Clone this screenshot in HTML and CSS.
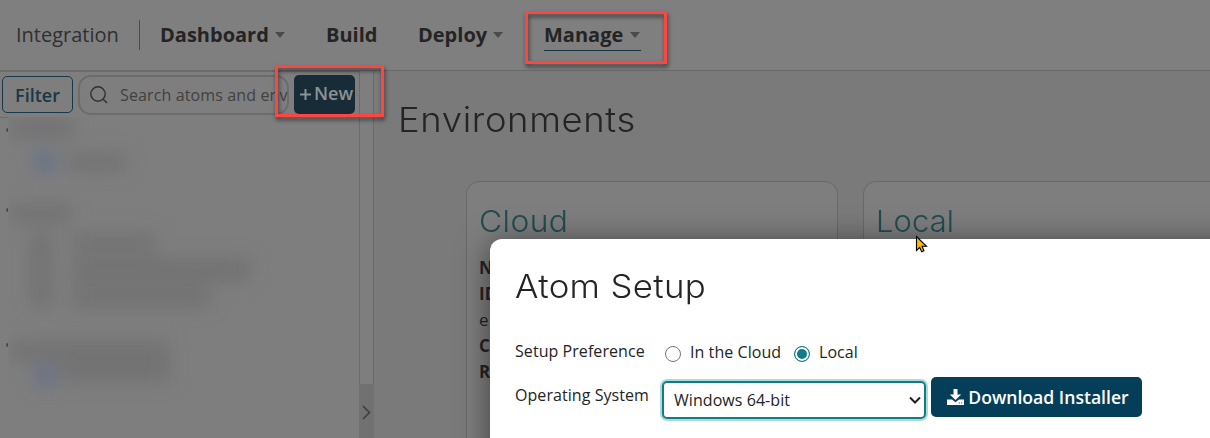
FILE: index.html
```
<!DOCTYPE html>
<html lang="en">
<head>
<meta charset="utf-8">
<title>Atom Setup</title>
<link rel="stylesheet" href="styles.css">
</head>
<body>
<div class="app">
  <header class="topbar">
    <span class="product">Integration</span>
    <nav class="nav">
      <a class="nav-item dashboard">Dashboard<i class="caret"></i></a>
      <a class="nav-item build">Build</a>
      <a class="nav-item deploy">Deploy<i class="caret"></i></a>
      <a class="nav-item manage active">Manage<i class="caret"></i></a>
    </nav>
  </header>
  <div class="workspace">
    <aside class="sidebar">
      <div class="toolbar">
        <button class="filter">Filter</button>
        <div class="search">
          <svg width="18" height="18" viewBox="0 0 18 18" fill="none" stroke="#303030" stroke-width="1.4"><circle cx="8" cy="8" r="7.2"/><path d="M13.2 13.2 17 17"/></svg>
          <span>Search atoms and env</span>
        </div>
        <button class="new"><svg width="11" height="11" viewBox="0 0 11 11" stroke="#8b9294" stroke-width="2"><path d="M5.5 0v11M0 5.5h11"/></svg><span>New</span></button>
      </div>
      <div class="tree">
        <svg width="359" height="321" viewBox="0 117 359 321">
          <defs>
            <filter id="soft" x="-50%" y="-50%" width="200%" height="200%"><feGaussianBlur stdDeviation="9"/></filter>
            <clipPath id="rows"><rect x="8" y="117" width="351" height="321"/></clipPath>
          </defs>
          <g fill="#4a4a4a"><circle cx="8" cy="130" r="2"/><circle cx="8" cy="210" r="2"/><circle cx="8" cy="345" r="2"/></g>
          <rect x="8" y="116" width="351" height="322" fill="#7e7e7e"/>
          <g clip-path="url(#rows)"><g filter="url(#soft)" fill="#727272">
            <rect x="10" y="118" width="64" height="20"/>
            <rect x="68" y="153" width="58" height="18"/>
            <rect x="10" y="204" width="62" height="19"/>
            <rect x="30" y="233" width="22" height="74"/>
            <rect x="72" y="233" width="84" height="20"/>
            <rect x="72" y="258" width="178" height="24"/>
            <rect x="72" y="286" width="138" height="22"/>
            <rect x="10" y="341" width="160" height="20"/>
            <rect x="60" y="362" width="110" height="20"/>
            <g fill="#65708a"><circle cx="45" cy="162" r="11"/><circle cx="45" cy="376" r="11"/></g>
          </g></g>
        </svg>
      </div>
    </aside>
    <div class="splitter"><div class="track"></div><div class="handle"><svg width="9" height="15" viewBox="0 0 9 15" fill="none" stroke="#404040" stroke-width="1.7"><path d="m1 1 6.5 6.5L1 14"/></svg></div></div>
    <main class="content">
      <h1>Environments</h1>
      <div class="cards">
        <section class="card"><h2 class="cloud">Cloud</h2>
          <div class="details"><b>N</b><b>ID</b><span>e</span><b>C</b><b>R</b></div>
        </section>
        <section class="card"><h2 class="local">Local</h2></section>
      </div>
    </main>
  </div>
  <div class="modal">
    <h2 class="title">Atom Setup</h2>
    <div class="row preference">
      <label class="label">Setup Preference</label>
      <span class="radio"></span><span class="option cloud-option">In the Cloud</span>
      <span class="radio checked"></span><span class="option">Local</span>
    </div>
    <div class="row system">
      <label class="label os">Operating System</label>
      <div class="select"><span>Windows 64-bit</span><svg width="12" height="9" viewBox="0 0 12 9" fill="none" stroke="#202020" stroke-width="2"><path d="m1 1.5 5 5 5-5"/></svg></div>
      <button class="download"><svg width="17" height="16" viewBox="0 0 17 16"><path fill="#fff" d="M6.5 0h4v5.5h3.7L8.5 11 2.8 5.5h3.7zM0 10.5h5l3.5 2.8 3.5-2.8h5V16H0z"/><path fill="#053e59" d="M11.8 13.5h1v1h-1zm2.3 0h1v1h-1z"/></svg><span>Download Installer</span></button>
    </div>
  </div>
  <div class="mark mark-manage"></div>
  <div class="mark mark-new"></div>
  <svg class="pointer" width="13" height="18" viewBox="0 0 13 18"><path d="M1.5 1.5v14l3.2-3 2 4.2 2.2-1-1.8-4.4h4.4z" fill="#fdbb08" stroke="#000" stroke-width="1.1"/></svg>
</div>
</body>
</html>
```
FILE: styles.css
```
* { box-sizing: border-box; }
body { margin: 0; font-family: "Open Sans", "Noto Sans", sans-serif; color: #242424; }
h1, h2 { margin: 0; font-family: Inter, Lato, sans-serif; font-weight: 300; white-space: nowrap; transform-origin: 0 50%; }
button { padding: 0; border: 0; font-family: inherit; white-space: nowrap; }
.app { position: relative; width: 1210px; height: 438px; overflow: hidden; display: flex; flex-direction: column; background: #7e7e7e; }
.topbar { height: 71px; flex: none; display: flex; align-items: flex-start; padding: 20px 0 0 16px; border-bottom: 1px solid #696969; background: #7f7f7f; white-space: nowrap; }
.product { width: 124px; height: 30px; border-right: 1px solid #4b4b4b; font-size: 20px; line-height: 30px; color: #303030; }
.nav { display: flex; padding-left: 20px; }
.nav-item { display: flex; align-items: center; justify-content: space-between; height: 31px; padding-bottom: 1px; font-size: 20px; line-height: 30px; font-weight: 700; }
.dashboard { width: 125px; margin-right: 41px; }
.build { width: 52px; margin-right: 40px; }
.deploy { width: 85px; margin-right: 41px; }
.manage { width: 97px; padding: 0 1px 0 0; border-bottom: 1px solid #173544; }
.caret { border: 5px solid transparent; border-top: 6px solid #4b4b4b; border-bottom: 0; }
.workspace { flex: 1; min-height: 0; display: flex; }
.sidebar { width: 359px; display: flex; flex-direction: column; border-top: 1px solid #6c6c6c; }
.toolbar { height: 46px; flex: none; display: flex; align-items: flex-start; padding: 3px 0 0 2px; border-bottom: 1px solid #6b6b6b; }
.filter { width: 71px; height: 37px; margin: 1px 5px 0 0; border: 1px solid #17394a; border-radius: 5px; background: transparent; color: #193746; font-size: 18px; font-weight: 600; }
.search { width: 211px; height: 40px; margin-right: 5px; padding-left: 10px; border: 2px solid #6c6c6c; border-radius: 13px; display: flex; align-items: center; font-size: 16px; letter-spacing: .13px; color: #414141; white-space: nowrap; }
.search svg { flex: none; margin-right: 12px; }
.new { width: 61px; height: 39px; padding-left: 4px; border-radius: 5px; background: #182c38; color: #8b9294; font-size: 18px; font-weight: 600; display: flex; align-items: center; justify-content: center; gap: 3px; }
.new span { padding-bottom: 3px; }
.tree { height: 321px; }
.tree svg { display: block; margin-top: -1px; }
.splitter { width: 15px; display: flex; flex-direction: column; }
.track { height: 313px; border: 1px solid #6b6b6b; border-top: 0; border-bottom: 0; }
.handle { flex: 1; display: flex; justify-content: center; align-items: center; padding-top: 3px; background: #717171; }
.content { flex: 1; min-width: 0; background: #7a7a7a; }
.content h1 { width: 260px; margin-left: 24px; padding-top: 24px; font-size: 34px; line-height: 50px; letter-spacing: .6px; transform: scaleX(1.07); }
.cards { display: flex; gap: 25px; padding: 36px 0 0 92px; }
.card { width: 372px; height: 290px; flex: none; padding: 18px 12px; border: 1px solid #696969; border-radius: 13px; background: #7e7e7e; }
.card h2 { font-size: 30px; line-height: 42px; color: #204c50; }
.card .cloud { letter-spacing: .4px; transform: scaleX(1.06); }
.card .local { letter-spacing: .1px; transform: scaleX(1.03); }
.details { display: flex; flex-direction: column; padding-top: 13px; font-size: 17px; line-height: 26px; }
.modal { position: absolute; left: 490px; top: 239px; width: 760px; height: 240px; padding: 22px 0 0 25px; border-radius: 12px 0 0 0; background: #fff; box-shadow: 0 4px 32px rgba(0,0,0,.5); }
.title { width: 250px; height: 50px; font-size: 33px; line-height: 50px; letter-spacing: .3px; transform: scaleX(1.055); }
.row { display: flex; white-space: nowrap; font-size: 16px; line-height: 24px; letter-spacing: .06px; }
.preference { height: 36px; align-items: flex-start; margin-top: 27px; }
.label { width: 150px; padding-top: 1px; }
.radio { width: 16px; height: 16px; margin-top: 8px; border: 1px solid #767676; border-radius: 50%; }
.checked { border-color: #127b87; background: #127b87; box-shadow: inset 0 0 0 2px #fff; }
.option { margin: 2px 0 0 9px; }
.cloud-option { width: 104px; }
.system { align-items: flex-start; padding-top: 2px; }
.label.os { width: 147px; padding-top: 7px; }
.select { width: 264px; height: 38px; margin-top: 5px; padding: 0 3px 0 10px; display: flex; align-items: center; justify-content: space-between; border: 2px solid #127b87; border-radius: 5px; box-shadow: 0 0 0 2px #a8ddd9; }
.download { width: 211px; height: 40px; margin: 1px 0 0 5px; border-radius: 5px; background: #053e59; color: #fff; display: flex; align-items: center; justify-content: center; gap: 4px; padding-left: 3px; font-size: 17.6px; font-weight: 600; }
.mark { position: absolute; border: 3px solid #ff4540; filter: drop-shadow(1px 3px 2px rgba(0,0,0,.55)); }
.mark-manage { left: 525px; top: 11px; width: 142px; height: 53px; }
.mark-new { left: 275px; top: 65px; width: 109px; height: 52px; }
.pointer { position: absolute; left: 915px; top: 235px; }
```
